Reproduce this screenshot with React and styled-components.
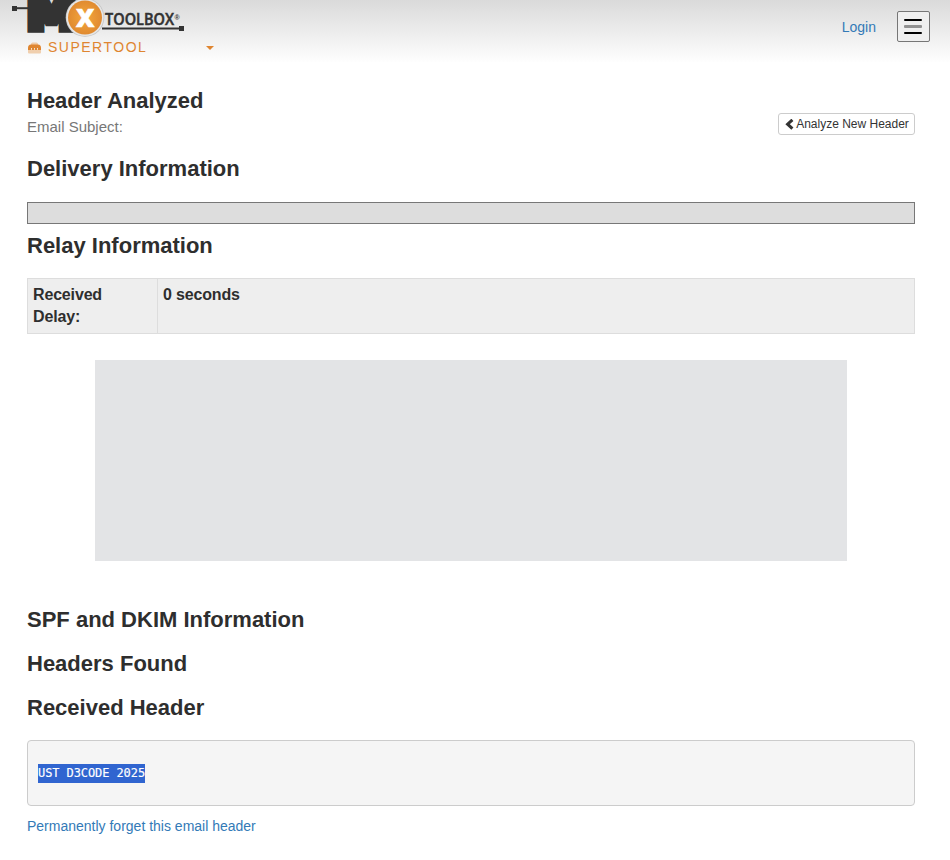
import React from "react";
import styled, { createGlobalStyle } from "styled-components";

const Global = createGlobalStyle`
  * { box-sizing: border-box; }
  body {
    margin: 0;
    background: #fff;
    color: #333;
    font-family: "Liberation Sans", Arial, sans-serif;
    font-size: 14px;
    line-height: 20px;
  }
`;

const Page = styled.div`
  height: 860px;
  overflow: hidden;
`;

const TopBar = styled.header`
  display: flex;
  justify-content: space-between;
  height: 62px;
  padding: 0 20px 0 12px;
  background: linear-gradient(#dadada, #fefefe);
`;

const Brand = styled.div`
  display: flex;
  flex-direction: column;
`;

const LogoArt = styled.svg`
  display: block;
  width: 174px;
  height: 37px;
`;

const ToolMenu = styled.div`
  display: flex;
  align-items: center;
  width: 202px;
  height: 20px;
  padding-left: 15px;
  color: #df8530;
`;

const ToolName = styled.span`
  margin-left: 6px;
  letter-spacing: 1.5px;
  line-height: 20px;
`;

const Caret = styled.span`
  margin-left: auto;
  margin-top: 2px;
  border: 4px solid transparent;
  border-top-color: #df8530;
  border-bottom: 0;
`;

const Actions = styled.div`
  display: flex;
  align-items: flex-start;
  gap: 21px;
  padding-top: 11px;
`;

const Link = styled.a`
  color: #337ab7;
  text-decoration: none;
  line-height: 20px;
`;

const LoginLink = styled(Link)`
  margin-top: 6px;
`;

const MenuButton = styled.button`
  display: flex;
  flex-direction: column;
  align-items: center;
  justify-content: center;
  gap: 4px;
  width: 33px;
  height: 31px;
  padding: 0 1px 0 0;
  background: #efefef;
  border: 1px solid #767676;
  border-radius: 2px;
`;

const MenuBar = styled.span`
  width: 18px;
  height: ${(p) => (p.$muted ? "3px" : "2px")};
  border-radius: 1px;
  background: ${(p) => (p.$muted ? "#919191" : "#000")};
`;

const Content = styled.main`
  padding: 27px 35px 0 27px;
`;

const Heading = styled.h3`
  margin: 0;
  font-size: 22px;
  font-weight: 700;
  line-height: 24px;
  color: #2e2e2e;
`;

const TitleRow = styled.div`
  display: flex;
  justify-content: space-between;
  align-items: flex-start;
  height: 68px;
`;

const Subject = styled.div`
  margin-top: 4px;
  font-size: 15px;
  line-height: 20px;
  color: #777;
`;

const AnalyzeButton = styled.button`
  display: flex;
  align-items: center;
  justify-content: center;
  gap: 2px;
  width: 137px;
  height: 22px;
  margin-top: 24px;
  padding: 0 0 0 1px;
  font: 12px/18px "Liberation Sans", Arial, sans-serif;
  color: #333;
  background: #fff;
  border: 1px solid #ccc;
  border-radius: 3px;
`;

const DeliveryBar = styled.div`
  height: 22px;
  margin: 21px 0 10px;
  background: #ddd;
  border: 1px solid #777;
`;

const DelayTable = styled.div`
  display: grid;
  grid-template-columns: 129px 1fr;
  height: 56px;
  margin-top: 20px;
  border: 1px solid #ddd;
  background: #eee;
`;

const DelayCell = styled.div`
  padding: 5px;
  font-size: 16px;
  font-weight: 700;
  line-height: 22px;
  letter-spacing: -0.16px;
  color: #2e2e2e;
  & + & { border-left: 1px solid #ddd; }
`;

const Chart = styled.div`
  width: 752px;
  height: 201px;
  margin: 26px 0 47px 67.5px;
  background: #e3e4e6;
`;

const Sections = styled.div`
  display: flex;
  flex-direction: column;
  gap: 20px;
`;

const RawHeader = styled.pre`
  height: 66px;
  margin: 20px 0 10px;
  padding: 23px 10px 0;
  font: 12px/19px "DejaVu Sans Mono", monospace;
  letter-spacing: -0.09px;
  background: #f5f5f5;
  border: 1px solid #ccc;
  border-radius: 4px;
`;

const Selected = styled.span`
  display: inline-block;
  height: 19px;
  color: #fff;
  background: #3065d0;
  -webkit-text-stroke: 0.15px #fff;
`;

const Logo = () => (
  <LogoArt viewBox="12 0 174 37">
    <defs>
      <radialGradient id="disc">
        <stop offset="0" stopColor="#f5a83c" />
        <stop offset="1" stopColor="#e08a30" />
      </radialGradient>
    </defs>
    <rect x="12" y="6" width="5" height="5" fill="#333" />
    <rect x="16" y="7.2" width="12" height="2" fill="#333" />
    <text x="27" y="28.6" fontFamily="DejaVu Sans" fontWeight="700" fontSize="44" textLength="49" lengthAdjust="spacingAndGlyphs" fill="#333" stroke="#333" strokeWidth="7.4">M</text>
    <circle cx="85" cy="17.5" r="19.3" fill="#c4c4c4" />
    <circle cx="85" cy="17.5" r="18.6" fill="#e6e6e6" />
    <circle cx="85" cy="17.5" r="17" fill="url(#disc)" />
    <text x="85.2" y="26.5" textAnchor="middle" fontFamily="Open Sans" fontWeight="800" fontSize="25.5" fill="#fff" stroke="#fff" strokeWidth="0.6">X</text>
    <text x="105" y="25" fontFamily="Open Sans" fontWeight="600" fontSize="15.5" textLength="69" lengthAdjust="spacingAndGlyphs" fill="#333" stroke="#333" strokeWidth="0.5">TOOLBOX</text>
    <text x="174.5" y="20" fontFamily="Liberation Sans" fontWeight="700" fontSize="7" fill="#333">®</text>
    <rect x="102" y="27.5" width="79" height="2" fill="#333" />
    <rect x="179" y="26" width="5" height="5" fill="#333" />
  </LogoArt>
);

const ToolboxIcon = () => (
  <svg width="15" height="13" viewBox="0 0 15 13">
    <path d="M1 7.5h13v4a1 1 0 0 1-1 1H2a1 1 0 0 1-1-1z" fill="#f0cfae" />
    <path d="M4 4V3q0-1.6 1.6-1.6h3.8Q11 1.4 11 3v1" fill="#efc9a5" />
    <path d="M1 9V7q0-3.5 3-3.5h7q3 0 3 3.5v2h-3V7h-1v2H8V7H7v2H5V7H4v2z" fill="#df8530" />
  </svg>
);

const ChevronLeft = () => (
  <svg width="9" height="11" viewBox="0 0 9 11">
    <path d="M7.4 .8 2.6 5.2 7.4 9.6" fill="none" stroke="#333" strokeWidth="3" />
  </svg>
);

export default function App() {
  return (
    <Page>
      <Global />
      <TopBar>
        <Brand>
          <Logo />
          <ToolMenu>
            <ToolboxIcon />
            <ToolName>SUPERTOOL</ToolName>
            <Caret />
          </ToolMenu>
        </Brand>
        <Actions>
          <LoginLink>Login</LoginLink>
          <MenuButton aria-label="Menu">
            <MenuBar />
            <MenuBar $muted />
            <MenuBar />
          </MenuButton>
        </Actions>
      </TopBar>
      <Content>
        <TitleRow>
          <div>
            <Heading>Header Analyzed</Heading>
            <Subject>Email Subject:</Subject>
          </div>
          <AnalyzeButton>
            <ChevronLeft />
            Analyze New Header
          </AnalyzeButton>
        </TitleRow>
        <Heading>Delivery Information</Heading>
        <DeliveryBar />
        <Heading>Relay Information</Heading>
        <DelayTable>
          <DelayCell>Received Delay:</DelayCell>
          <DelayCell>0 seconds</DelayCell>
        </DelayTable>
        <Chart />
        <Sections>
          <Heading>SPF and DKIM Information</Heading>
          <Heading>Headers Found</Heading>
          <Heading>Received Header</Heading>
        </Sections>
        <RawHeader><Selected>UST D3CODE 2025</Selected></RawHeader>
        <Link>Permanently forget this email header</Link>
      </Content>
    </Page>
  );
}
